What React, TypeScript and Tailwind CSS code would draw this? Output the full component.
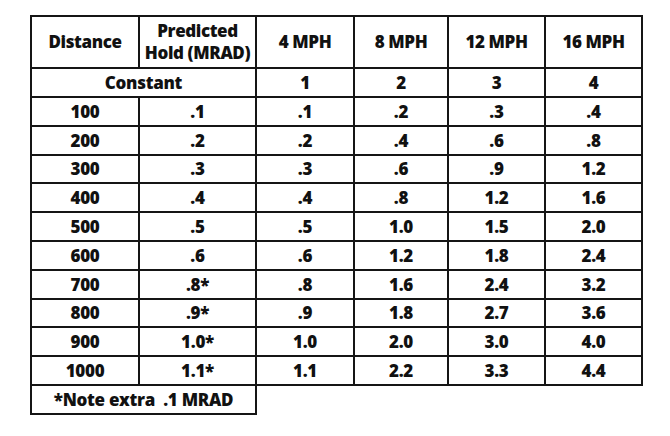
import React from 'react';

const speeds = ['4 MPH', '8 MPH', '12 MPH', '16 MPH'];
const constants = ['1', '2', '3', '4'];

const rows: [string, string, string, string, string, string][] = [
  ['100', '.1', '.1', '.2', '.3', '.4'],
  ['200', '.2', '.2', '.4', '.6', '.8'],
  ['300', '.3', '.3', '.6', '.9', '1.2'],
  ['400', '.4', '.4', '.8', '1.2', '1.6'],
  ['500', '.5', '.5', '1.0', '1.5', '2.0'],
  ['600', '.6', '.6', '1.2', '1.8', '2.4'],
  ['700', '.8*', '.8', '1.6', '2.4', '3.2'],
  ['800', '.9*', '.9', '1.8', '2.7', '3.6'],
  ['900', '1.0*', '1.0', '2.0', '3.0', '4.0'],
  ['1000', '1.1*', '1.1', '2.2', '3.3', '4.4'],
];

const cell = 'border-2 border-[#151515] text-center align-middle p-0';

export default function App() {
  return (
    <div
      className="w-[670px] h-[436px] bg-white pl-[30px] pt-[15px] text-[#111]"
      style={{ fontFamily: '"Open Sans", "Noto Sans", sans-serif' }}
    >
      <table className="table-fixed border-collapse font-extrabold text-[17px] leading-[21px] tracking-[-0.3px]">
        <colgroup>
          <col className="w-[108px]" />
          <col className="w-[117px]" />
          <col className="w-[98px]" />
          <col className="w-[94px]" />
          <col className="w-[97px]" />
          <col className="w-[97px]" />
        </colgroup>
        <tbody>
          {/* Header */}
          <tr className="h-[52px] text-[17px] leading-[22px] tracking-[-0.4px]">
            <td className={cell}>Distance</td>
            <td className={cell}>
              Predicted
              <br />
              Hold (MRAD)
            </td>
            {speeds.map(s => (
              <td key={s} className={cell}>{s}</td>
            ))}
          </tr>

          {/* Constant row */}
          <tr className="h-[29px]">
            <td colSpan={2} className={cell}>Constant</td>
            {constants.map(c => (
              <td key={c} className={cell}>{c}</td>
            ))}
          </tr>

          {rows.map(r => (
            <tr key={r[0]} className="h-[28.8px]">
              {r.map((v, i) => (
                <td key={i} className={cell}>{v}</td>
              ))}
            </tr>
          ))}

          {/* Footnote */}
          <tr className="h-[29px]">
            <td colSpan={2} className={cell}>*Note extra&nbsp; .1 MRAD</td>
            <td colSpan={4} className="p-0"></td>
          </tr>
        </tbody>
      </table>
    </div>
  );
}
